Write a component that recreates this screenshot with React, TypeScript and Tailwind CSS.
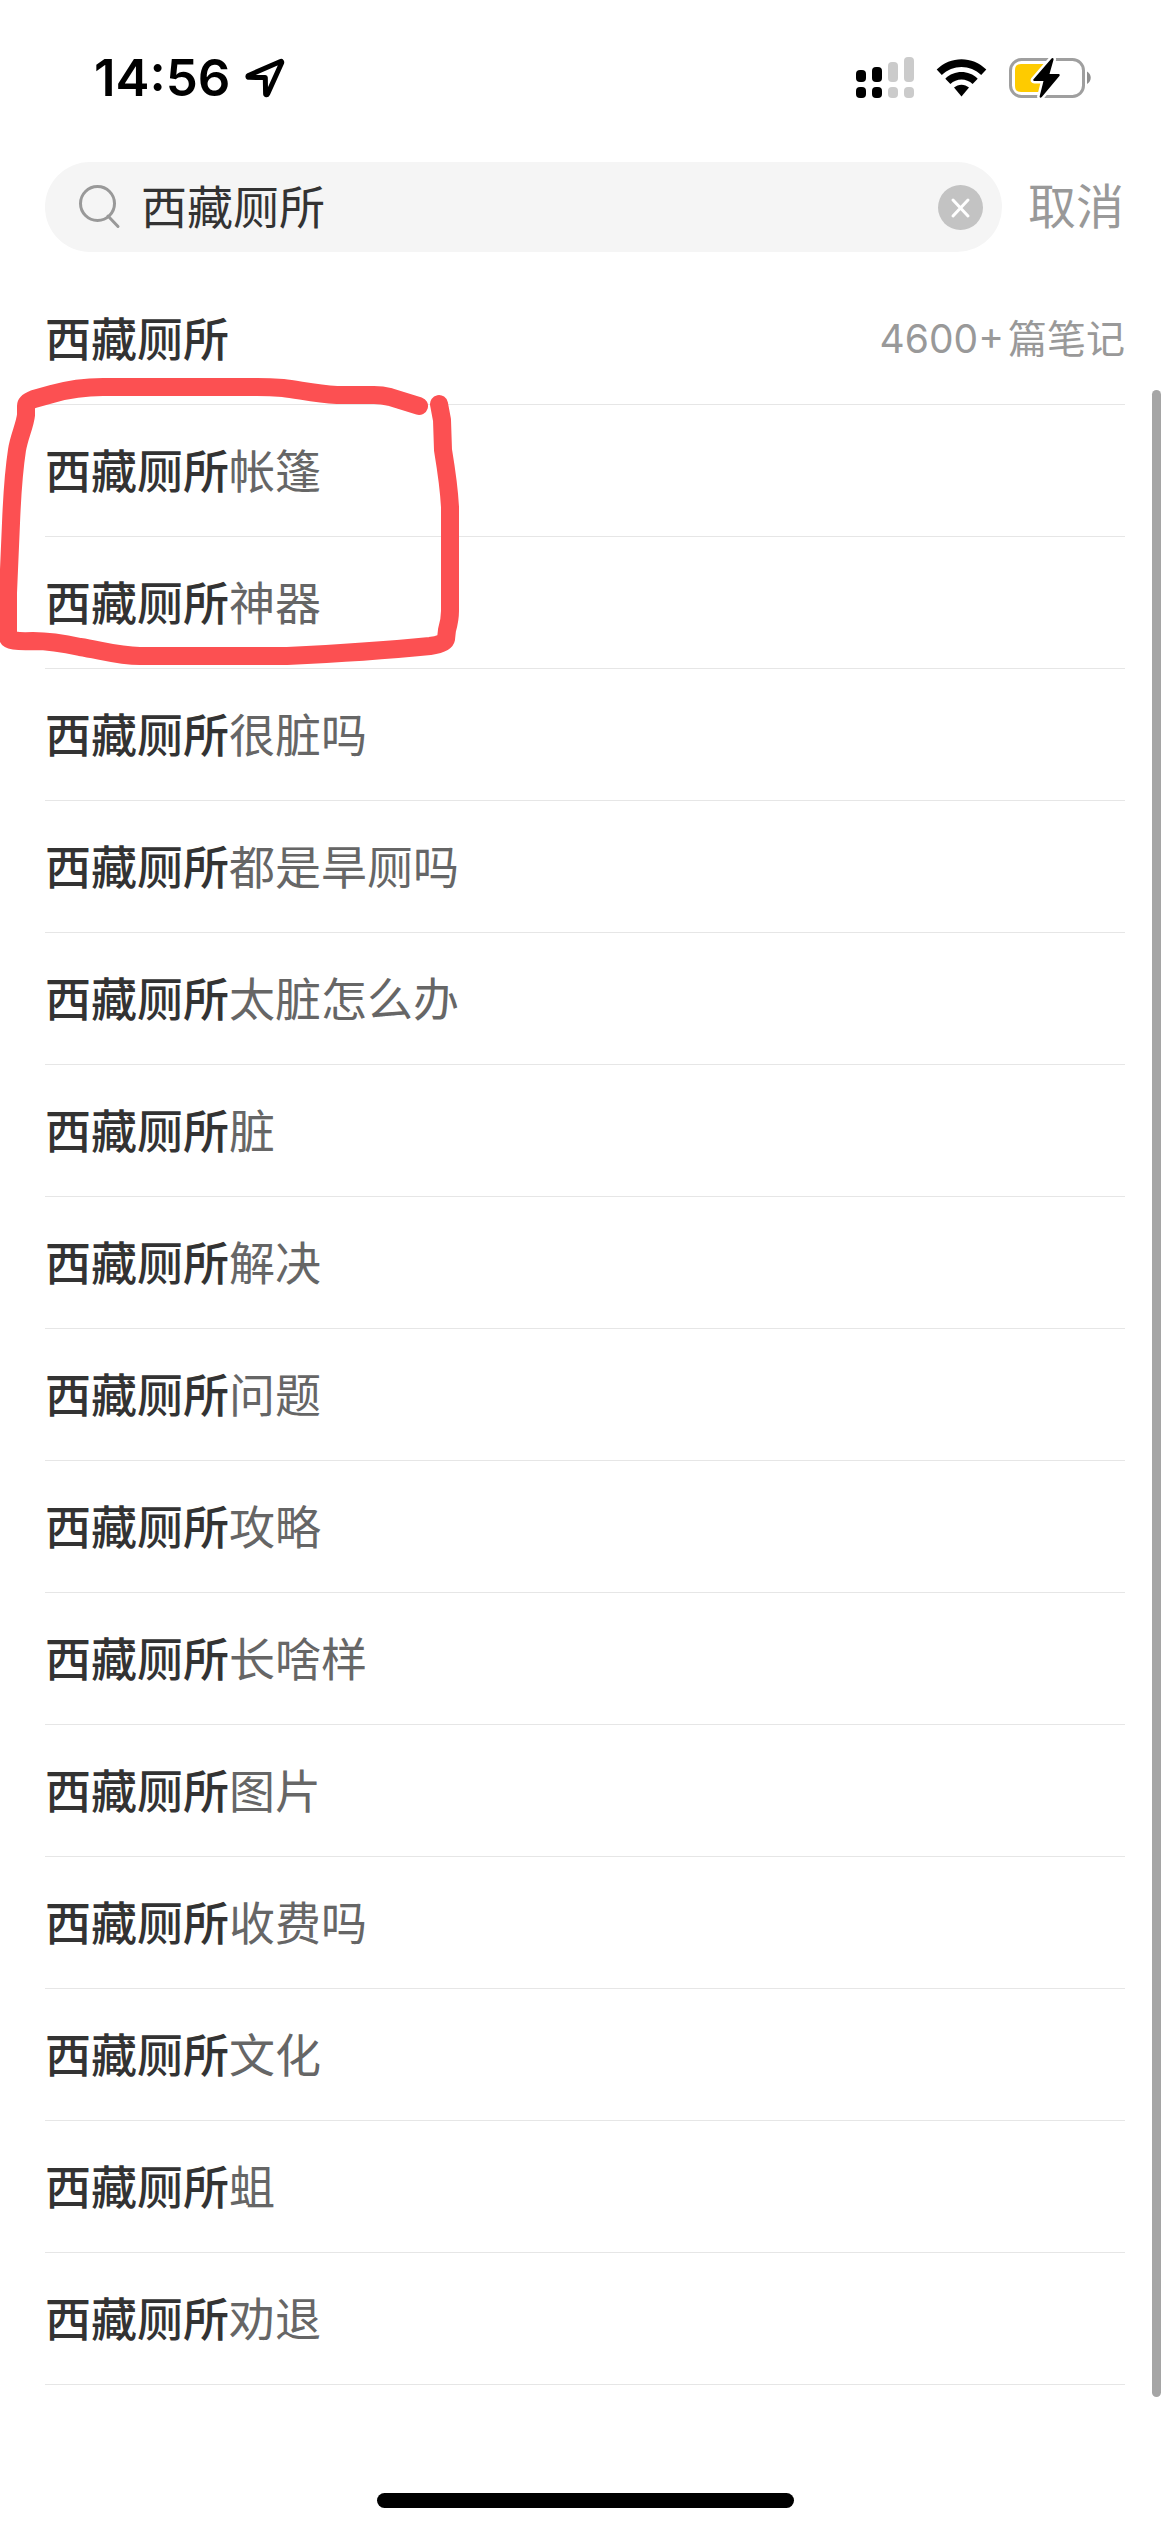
//suggestions shown under the search box
const keyword = "西藏厕所";
const suggestions = [
  "",
  "帐篷",
  "神器",
  "很脏吗",
  "都是旱厕吗",
  "太脏怎么办",
  "脏",
  "解决",
  "问题",
  "攻略",
  "长啥样",
  "图片",
  "收费吗",
  "文化",
  "蛆",
  "劝退",
];

function StatusBar() {
  return (
    <div className="flex items-center justify-between pt-[52px] pb-[58px] pl-[94px] pr-[78px]">
      <div className="flex h-[52px] items-center gap-[14px] text-black">
        <span className="text-[51px] leading-[52px] font-semibold">14:56</span>
        <svg width="40" height="40" viewBox="0 0 40 40" fill="none">
          <path
            d="M35.5 3.5L3.5 17.5C2.6 18 2.8 19.3 4 19.3L20.3 19.6L20.6 35.5C20.6 37 22 37.2 22.6 36L36.6 5C37 3.8 36.5 3.1 35.5 3.5Z"
            stroke="currentColor"
            strokeWidth="5"
            strokeLinejoin="round"
          />
        </svg>
      </div>
      <div className="flex h-[52px] items-center gap-[22px]">
        <svg width="58" height="42" viewBox="0 0 58 42">
          <g fill="#000">
            <rect x="0" y="13" width="10" height="12" rx="4" />
            <rect x="16" y="10" width="10" height="15" rx="4" />
            <rect x="0" y="30" width="10" height="11" rx="4" />
            <rect x="16" y="30" width="10" height="11" rx="4" />
          </g>
          <g fill="#cbcbcb">
            <rect x="32" y="5" width="10" height="20" rx="4" />
            <rect x="48" y="0" width="10" height="25" rx="4" />
            <rect x="32" y="30" width="10" height="11" rx="4" />
            <rect x="48" y="30" width="10" height="11" rx="4" />
          </g>
        </svg>
        <svg width="51" height="38" viewBox="0 0 51 38">
          <path d="M0.7 10.6C14.5 -3.2 36.5 -3.2 50.3 10.6L45.2 16C34.3 5.2 16.7 5.2 5.8 16Z" />
          <path d="M9.3 19.7C18.3 10.8 32.7 10.8 41.7 19.7L36.6 25C30.5 18.9 20.5 18.9 14.4 25Z" />
          <path d="M18 28.6C22.2 24.7 28.8 24.7 33 28.6L25.5 37.5Z" />
        </svg>
        <svg width="83" height="42" viewBox="0 0 83 42">
          <rect
            x="1.5"
            y="2.5"
            width="73"
            height="37"
            rx="11"
            fill="none"
            stroke="#9f9f9f"
            strokeWidth="3"
          />
          <path d="M78 14.5C83 17 83 24.5 78 27Z" fill="#8f8f8f" />
          <path
            d="M12 7H37V35H12Q6 35 6 29V13Q6 7 12 7Z"
            fill="#fecb00"
          />
          <path
            d="M42.5 1.5L24.3 22.6Q23.6 24 25.3 24H34.5L30.6 39.5Q31 41.6 32.8 40L50.6 18.8Q51.4 17.2 49.6 17H40.5L44.6 2.5Q44.4 0.2 42.5 1.5Z"
            fill="#000"
            stroke="#fff"
            strokeWidth="5"
            paintOrder="stroke"
          />
        </svg>
      </div>
    </div>
  );
}

function SearchBar() {
  return (
    <form className="flex items-center gap-[26px] pr-[46px] pl-[45px]">
      <div className="flex h-[90px] min-w-0 flex-1 items-center rounded-full bg-[#f5f5f5] pr-[19px] pl-[34px]">
        <svg width="42" height="44" viewBox="0 0 42 44" fill="none">
          <g stroke="#999" strokeWidth="3">
            <circle cx="18.5" cy="18.5" r="17" />
            <path d="M29 31L39 41.5" strokeLinecap="round" />
          </g>
        </svg>
        <input
          type="text"
          aria-label="搜索"
          defaultValue={keyword}
          className="ml-5 h-[68px] min-w-0 flex-1 bg-transparent text-[46px] leading-[68px] text-[#333] outline-none"
        />
        <button type="reset" aria-label="清除" className="shrink-0">
          <svg width="45" height="45" viewBox="0 0 45 45">
            <circle cx="22.5" cy="22.5" r="22.5" fill="#c3c3c3" />
            <path
              d="M15 15L30 31M30 15L15 31"
              stroke="#fff"
              strokeWidth="3"
              strokeLinecap="round"
            />
          </svg>
        </button>
      </div>
      <button
        type="button"
        className="shrink-0 text-[48px] leading-[68px] text-[#999]"
      >
        取消
      </button>
    </form>
  );
}

//hand drawn marker around the first two long suggestions
function Marker() {
  return (
    <svg
      className="pointer-events-none absolute top-0 left-0"
      width="480"
      height="400"
      viewBox="0 0 480 400"
      fill="none"
      stroke="#fc5052"
      strokeWidth="18"
      strokeLinecap="round"
      strokeLinejoin="round"
    >
      <path d="M419 133L390 124Q382 122 374 122H337C315 121 300 117 283 115Q270 114 257 114H103C86 114 66 117 52 121L34 126Q26 129 26 133V142C25 152 19 164 17 177C13 203 12 225 11 250L8 320V364Q8 369 33 368C50 368 62 370 80 374C100 377 118 383 140 383H287C330 381 400 376 430 373Q445 371 446 366L447 357C449 350 450 345 450 338V234C449 215 446 195 443 177L442 147L439 131" />
    </svg>
  );
}

export default function App() {
  return (
    <div className="flex min-h-screen flex-col bg-white font-['Inter','Noto_Sans_CJK_SC',sans-serif]">
      <header>
        <StatusBar />
        <SearchBar />
      </header>
      <main className="relative mt-[21px]">
        <ul className="px-[45px]">
          {suggestions.map((item) => (
            <li key={item} className="border-b border-[#e6e6e6]">
              <a
                href="#"
                className="flex h-[131px] items-center text-[46px] leading-[68px] text-[#666]"
              >
                <span className="font-medium text-[#333]">{keyword}</span>
                {item}
                {!item && (
                  <span className="ml-auto flex gap-1 text-[39px] text-[#999]">
                    <span>4600+</span>
                    <span>篇笔记</span>
                  </span>
                )}
              </a>
            </li>
          ))}
        </ul>
        <div className="absolute top-[117px] right-[9px] -bottom-3 w-[9px] rounded-full bg-[#a5a5a5]" />
        <Marker />
      </main>
      <footer className="mt-auto flex justify-center pb-6">
        <div className="h-[15px] w-[417px] rounded-full bg-black" />
      </footer>
    </div>
  );
}
